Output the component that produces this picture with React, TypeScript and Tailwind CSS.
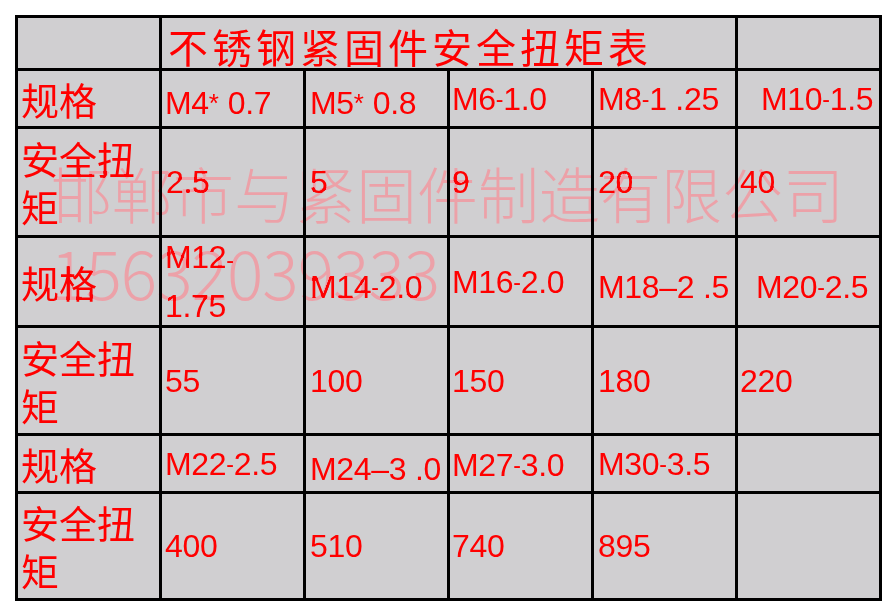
import React from 'react';

// small hyphen used between thread size and pitch
function Spec({ t }: { t: string }) {
  const parts = t.split('-');
  return (
    <>
      {parts.map((p, i) => (
        <React.Fragment key={i}>
          {i > 0 && <span className="text-[23px]">-</span>}
          {p}
        </React.Fragment>
      ))}
    </>
  );
}

const cell = 'bg-[#d0cfd1] flex items-center overflow-visible';
const num = "font-['Liberation_Sans',Arial,sans-serif] text-[32px] leading-[36px] text-[#ff0000] whitespace-nowrap tracking-[-0.3px]";
const zh = "font-['Noto_Sans_CJK_SC',sans-serif] text-[#ff0000]";

const Label = ({ text }: { text: string }) => (
  <div className={`${cell} ${zh} text-[38px] leading-[48px] pl-[3px]`}>{text}</div>
);

const Val = ({ children, className = '' }: { children?: React.ReactNode; className?: string }) => (
  <div className={`${cell} ${num} ${className}`}>{children}</div>
);

const App = () => {
  return (
    <div className="relative w-[896px] h-[616px] bg-white pl-[15px] pt-[15px]">
      <div className="grid grid-cols-[repeat(6,141px)] grid-rows-[50px_55px_106px_87px_105px_55px_104px] gap-[3px] p-[3px] bg-black w-fit">
        {/* title row */}
        <div className={cell} />
        <div className={`${cell} col-span-4 ${zh} text-[40px] leading-none tracking-[4px] pl-[6px] pt-[6px]`}>
          不锈钢紧固件安全扭矩表
        </div>
        <div className={cell} />

        <Label text="规格" />
        <Val className="pl-[3px] pt-[8px]">M4<span className="text-[26px]">*</span><span className="ml-[9px]">0.7</span></Val>
        <Val className="pl-[4px] pt-[8px]">M5<span className="text-[26px]">*</span><span className="ml-[9px]">0.8</span></Val>
        <Val className="pl-[2px]"><Spec t="M6-1.0" /></Val>
        <Val className="pl-[4px]"><Spec t="M8-1 .25" /></Val>
        <Val className="pl-[23px]"><Spec t="M10-1.5" /></Val>

        <Label text="安全扭矩" />
        <Val className="pl-[4px]">2.5</Val>
        <Val className="pl-[4px]">5</Val>
        <Val className="pl-[2px]">9</Val>
        <Val className="pl-[4px]">20</Val>
        <Val className="pl-[2px]">40</Val>

        <Label text="规格" />
        <Val className="pl-[3px] leading-[46px]">
          <div>
            <Spec t="M12-" />
            <br />
            1.75
          </div>
        </Val>
        <Val className="pl-[4px] pt-[10px]"><Spec t="M14-2.0" /></Val>
        <Val className="pl-[2px]"><Spec t="M16-2.0" /></Val>
        <Val className="pl-[4px] pt-[10px]">M18–2 .5</Val>
        <Val className="pl-[18px] pt-[10px]"><Spec t="M20-2.5" /></Val>

        <Label text="安全扭矩" />
        <Val className="pl-[3px]">55</Val>
        <Val className="pl-[4px]">100</Val>
        <Val className="pl-[2px]">150</Val>
        <Val className="pl-[4px]">180</Val>
        <Val className="pl-[2px]">220</Val>

        <Label text="规格" />
        <Val className="pl-[3px]"><Spec t="M22-2.5" /></Val>
        <Val className="pl-[4px] pt-[10px]">M24–3 .0</Val>
        <Val className="pl-[2px] pt-[3px]"><Spec t="M27-3.0" /></Val>
        <Val className="pl-[4px]"><Spec t="M30-3.5" /></Val>
        <Val />

        <Label text="安全扭矩" />
        <Val className="pl-[3px]">400</Val>
        <Val className="pl-[4px]">510</Val>
        <Val className="pl-[2px]">740</Val>
        <Val className="pl-[4px]">895</Val>
        <Val />
      </div>

      {/* watermark */}
      <div className="absolute left-[51px] top-[162px] font-['Noto_Sans_CJK_SC',sans-serif] font-light text-[61px] leading-none text-[rgb(205,5,15)] mix-blend-overlay whitespace-nowrap pointer-events-none">
        邯郸市与紧固件制造有限公司
      </div>
      <div className="absolute left-[50px] top-[237px] font-['Noto_Sans_CJK_SC',sans-serif] font-light text-[68px] leading-none tracking-[-1px] text-[rgb(205,5,15)] mix-blend-overlay whitespace-nowrap pointer-events-none">
        15632039333
      </div>
    </div>
  );
};

export default App;
